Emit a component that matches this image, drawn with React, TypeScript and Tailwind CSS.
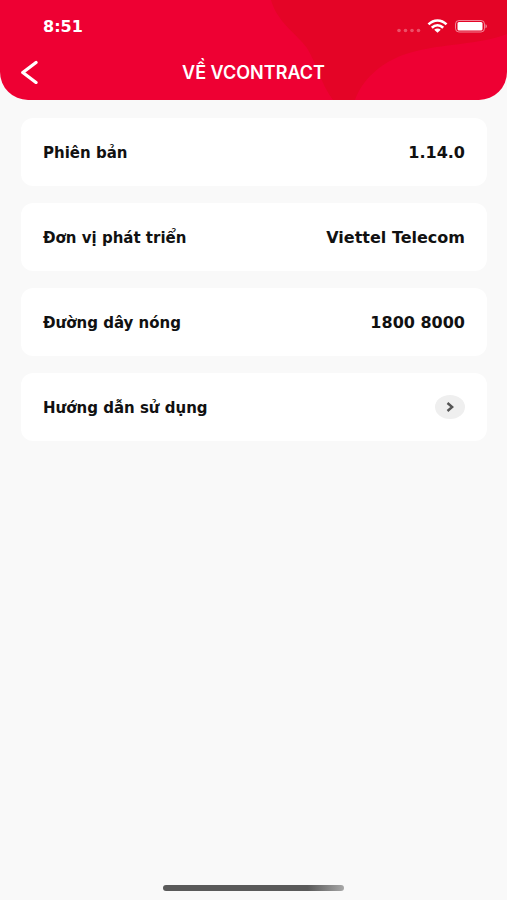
import React from 'react';

type InfoItem = {
  label: string;
  value: string;
};

const items: InfoItem[] = [
  { label: 'Phiên bản', value: '1.14.0' },
  { label: 'Đơn vị phát triển', value: 'Viettel Telecom' },
  { label: 'Đường dây nóng', value: '1800 8000' },
];

function HeaderPattern() {
  return (
    <svg
      className="absolute top-0 right-0 h-full w-[240px]"
      viewBox="0 0 240 100"
      preserveAspectRatio="none"
      aria-hidden="true"
    >
      <path
        d="M4 0 C10 22 30 34 40 48 C50 64 54 84 66 100 H88 C94 82 112 62 142 53 C176 43 212 45 240 34 V0 Z"
        fill="#e40426"
      />
    </svg>
  );
}

function StatusIcons() {
  return (
    <svg className="h-4 w-[92px]" viewBox="0 0 92 16" fill="none" aria-hidden="true">
      <g fill="#fff" fillOpacity="0.3">
        <circle cx="4" cy="12.5" r="1.8" />
        <circle cx="10.5" cy="12.5" r="1.8" />
        <circle cx="17" cy="12.5" r="1.8" />
        <circle cx="23.5" cy="12.5" r="1.8" />
      </g>
      <g stroke="#fff" strokeWidth="2.7">
        <path d="M33.5 6.4 C38.8 1.2 46.2 1.2 51.5 6.4" />
        <path d="M36.8 9.8 C40.2 6.6 44.8 6.6 48.2 9.8" />
      </g>
      <path d="M39.2 11.8 C41.2 10 43.8 10 45.8 11.8 L42.5 14.8 Z" fill="#fff" />
      <rect x="60.5" y="2.5" width="29" height="11.5" rx="3.5" stroke="#fff" strokeOpacity="0.5" />
      <rect x="62.5" y="4" width="25" height="8.5" rx="1.5" fill="#fff" />
      <path d="M90.5 6.2 C92.3 7 92.3 9.4 90.5 10.2 Z" fill="#fff" fillOpacity="0.55" />
    </svg>
  );
}

function Header() {
  return (
    <header className="relative overflow-hidden rounded-b-[28px] bg-[#ee0033] text-white">
      <HeaderPattern />
      <div className="relative flex h-[52px] items-center justify-between pr-5 pl-[43px]">
        <span className="pt-0.5 text-base leading-6 font-bold">8:51</span>
        <StatusIcons />
      </div>
      <div className="relative grid h-12 grid-cols-[48px_1fr_48px] items-start">
        <button type="button" aria-label="Quay lại" className="flex h-10 items-center pl-5">
          <svg className="h-6 w-[18px]" viewBox="0 0 18 24" fill="none" aria-hidden="true">
            <path
              d="M16 2.5 L2.8 12.5 L16 22.5"
              stroke="currentColor"
              strokeWidth="3.3"
              strokeLinecap="round"
              strokeLinejoin="round"
            />
          </svg>
        </button>
        <h1 className="text-center font-['Inter',sans-serif] text-lg leading-[42px] font-semibold">
          VỀ VCONTRACT
        </h1>
      </div>
    </header>
  );
}

const cardClass =
  'flex h-[68px] w-full items-center justify-between rounded-xl bg-white px-[22px] text-[15px] leading-6 font-bold text-[#111111]';

export default function App() {
  return (
    <div className="flex min-h-screen flex-col bg-[#f9f9f9] font-['DejaVu_Sans',sans-serif]">
      <Header />

      <main className="flex flex-1 flex-col gap-[17px] px-5 pt-[18px] pl-[21px]">
        <dl className="flex flex-col gap-[17px]">
          {items.map((item) => (
            <div key={item.label} className={cardClass}>
              <dt className="pt-0.5">{item.label}</dt>
              <dd className="pt-0.5 text-base">{item.value}</dd>
            </div>
          ))}
        </dl>
        <button type="button" className={cardClass}>
          <span className="pt-0.5">Hướng dẫn sử dụng</span>
          <span className="flex h-6 w-[30px] items-center justify-center rounded-[50%] bg-[#efefef]">
            <svg className="h-3 w-2" viewBox="0 0 8 12" fill="none" aria-hidden="true">
              <path d="M1.5 2 L6.2 6 L1.5 10" stroke="#555555" strokeWidth="2.4" />
            </svg>
          </span>
        </button>
      </main>

      {/* Home indicator */}
      <div className="flex justify-center pb-[9px]">
        <div className="h-[6px] w-[181px] rounded-full bg-linear-to-r from-[#5a5a5a] from-80% to-[#a8a8a8]" />
      </div>
    </div>
  );
}
